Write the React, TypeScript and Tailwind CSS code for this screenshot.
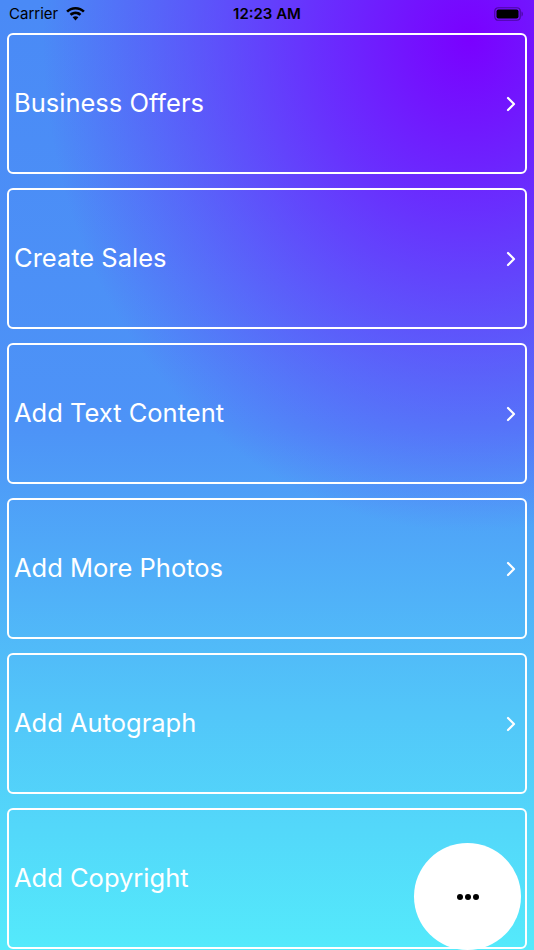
import React from "react";

const items = [
  "Business Offers",
  "Create Sales",
  "Add Text Content",
  "Add More Photos",
  "Add Autograph",
  "Add Copyright",
];

function Wifi() {
  return (
    <svg width="19" height="14" viewBox="0 0 19 14" aria-hidden>
      <path d="M9.5 0C5.9 0 2.6 1.4 0.2 3.7l1.8 1.9C4 3.7 6.6 2.6 9.5 2.6s5.5 1.1 7.5 3l1.8-1.9C16.4 1.4 13.1 0 9.5 0z" fill="#000" />
      <path d="M9.5 4.6c-2.3 0-4.3.9-5.8 2.3l1.8 1.9c1-1 2.4-1.6 4-1.6s3 .6 4 1.6l1.8-1.9c-1.5-1.4-3.5-2.3-5.8-2.3z" fill="#000" />
      <path d="M9.5 9.2c-1.1 0-2.1.4-2.9 1.1l2.9 3.1 2.9-3.1c-.8-.7-1.8-1.1-2.9-1.1z" fill="#000" />
    </svg>
  );
}

function Battery() {
  return (
    <svg width="30" height="14" viewBox="0 0 30 14" aria-hidden>
      <rect x="0.75" y="0.75" width="25.5" height="12.5" rx="3.5" fill="none" stroke="rgba(40,0,90,0.55)" strokeWidth="1.2" />
      <rect x="2.5" y="2.5" width="22" height="9" rx="2" fill="#000" />
      <path d="M27.5 4.5v5c.9-.3 1.4-1.4 1.4-2.5s-.5-2.2-1.4-2.5z" fill="rgba(40,0,90,0.55)" />
    </svg>
  );
}

function Chevron() {
  return (
    <svg width="10" height="16" viewBox="0 0 10 16" aria-hidden>
      <path d="M2 2l6 6-6 6" fill="none" stroke="#fff" strokeWidth="2.2" strokeLinecap="round" strokeLinejoin="round" />
    </svg>
  );
}

export default function App() {
  return (
    <div
      className="relative w-[534px] h-[950px] overflow-hidden bg-[radial-gradient(ellipse_80%_52%_at_88%_4%,#7a00ff_0%,rgba(110,30,255,0.85)_35%,rgba(100,60,250,0)_100%),linear-gradient(to_bottom,#4a8af6_0%,#4d93f7_45%,#52c6f9_75%,#54eafb_100%)]"
      style={{ fontFamily: "Inter, 'Liberation Sans', sans-serif" }}
    >
      {/* status bar */}
      <div className="relative flex h-[28px] items-center justify-between px-[9px] text-[15px] text-black">
        <div className="flex items-center gap-[8px]">
          <span>Carrier</span>
          <Wifi />
        </div>
        <span className="absolute left-1/2 -translate-x-1/2 font-semibold">12:23 AM</span>
        <div className="pr-[1px]">
          <Battery />
        </div>
      </div>

      {/* menu list */}
      <div className="flex flex-col gap-[14px] px-[7px] pt-[5px]">
        {items.map((label, i) => (
          <div
            key={label}
            className="flex h-[141px] items-center justify-between rounded-[6px] border-2 border-white pl-[5px] pr-[9px]"
          >
            <span className="text-[25.5px] text-white">{label}</span>
            {i < items.length - 1 && <Chevron />}
          </div>
        ))}
      </div>

      {/* floating action button */}
      <button className="absolute left-[414px] top-[843px] flex h-[107px] w-[107px] items-center justify-center rounded-full bg-white">
        <span className="flex gap-[2px]">
          <span className="h-[6px] w-[6px] rounded-full bg-black" />
          <span className="h-[6px] w-[6px] rounded-full bg-black" />
          <span className="h-[6px] w-[6px] rounded-full bg-black" />
        </span>
      </button>
    </div>
  );
}
